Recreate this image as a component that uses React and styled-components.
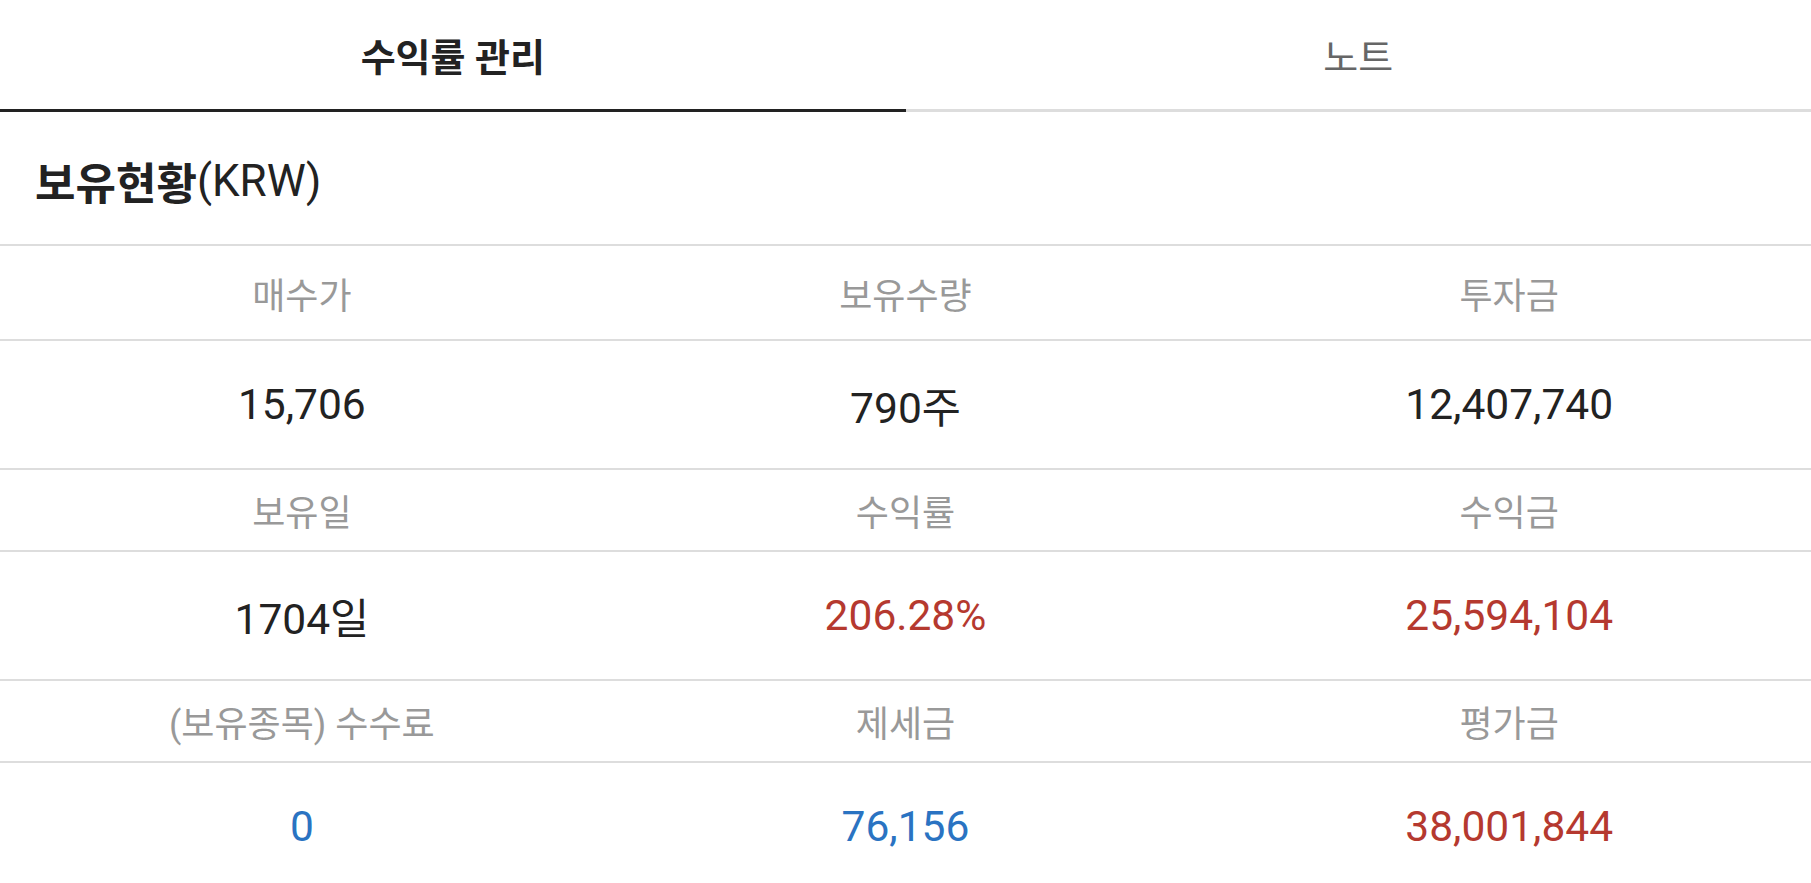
import React from 'react'
import styled, { createGlobalStyle } from 'styled-components'

const GlobalStyle = createGlobalStyle`
    body {
        margin: 0;
        background: #fff;
        font-family: Roboto, "Noto Sans CJK KR", sans-serif;
        color: #222;
    }
`

const Page = styled.div`
    width: 100%;
    min-height: 100vh;
    background: #fff;
`

const TabBar = styled.div`
    display: flex;
`

const Tab = styled.div`
    flex: 1;
    height: 109px;
    display: flex;
    align-items: center;
    justify-content: center;
    font-size: 38px;
    font-weight: ${(p) => (p.active ? 700 : 400)};
    color: ${(p) => (p.active ? '#222' : '#666')};
    border-bottom: 3px solid ${(p) => (p.active ? '#222' : '#dddddd')};
`

const Title = styled.h2`
    margin: 0;
    height: 132px;
    padding: 6px 35px 0;
    box-sizing: border-box;
    display: flex;
    align-items: center;
    font-size: 44px;
    font-weight: 700;
    color: #222;
`

const Unit = styled.span`
    font-weight: 400;
`

const Row = styled.div`
    display: grid;
    grid-template-columns: repeat(3, 1fr);
    align-items: center;
    height: ${(p) => p.height}px;
    box-sizing: border-box;
    border-top: 2px solid #dddddd;
`

const Label = styled.div`
    text-align: center;
    font-size: 36px;
    color: #999;
`

const Value = styled.div`
    text-align: center;
    font-size: 42.5px;
    color: ${(p) => (p.tone === 'up' ? '#b5392f' : p.tone === 'down' ? '#2a73c2' : '#222')};
`

const rows = [
    {
        labels: ['매수가', '보유수량', '투자금'],
        values: [['15,706'], ['790주'], ['12,407,740']],
        labelHeight: 95,
    },
    {
        labels: ['보유일', '수익률', '수익금'],
        values: [['1704일'], ['206.28%', 'up'], ['25,594,104', 'up']],
        labelHeight: 82,
    },
    {
        labels: ['(보유종목) 수수료', '제세금', '평가금'],
        values: [['0', 'down'], ['76,156', 'down'], ['38,001,844', 'up']],
        labelHeight: 82,
    },
]

const App = () => {
    return (
        <Page>
            <GlobalStyle />
            <TabBar>
                <Tab active>수익률 관리</Tab>
                <Tab>노트</Tab>
            </TabBar>
            <Title>
                보유현황<Unit>(KRW)</Unit>
            </Title>
            {rows.map((row, i) => (
                <React.Fragment key={i}>
                    <Row height={row.labelHeight}>
                        {row.labels.map((l) => (
                            <Label key={l}>{l}</Label>
                        ))}
                    </Row>
                    <Row height={129}>
                        {row.values.map(([v, tone]) => (
                            <Value key={v} tone={tone}>
                                {v}
                            </Value>
                        ))}
                    </Row>
                </React.Fragment>
            ))}
        </Page>
    )
}

export default App
